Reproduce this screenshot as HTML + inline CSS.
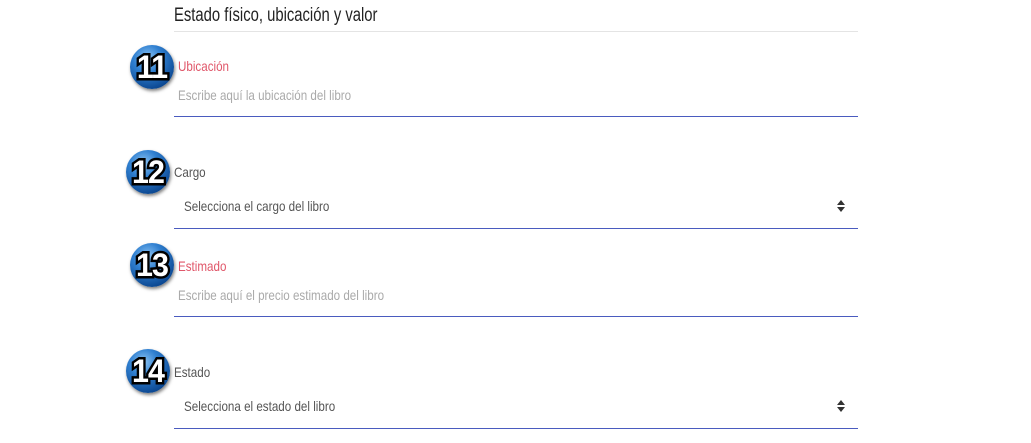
<!DOCTYPE html>
<html><head><meta charset="utf-8"><style>
html,body{margin:0;padding:0;background:#fff;width:1031px;height:443px;overflow:hidden}
body{position:relative;font-family:"Liberation Sans",sans-serif}
.t{position:absolute;white-space:nowrap;transform:scaleX(0.83);transform-origin:0 0}
.line{position:absolute;left:174px;width:684px;height:1px;background:#4a5bbf}
.badge{position:absolute;width:44px;height:44px;border-radius:50%;
background:radial-gradient(circle at 40% 30%,#8cc4f4 0%,#2f7fd0 35%,#0d4a94 75%,#07326a 100%);
box-shadow:1px 2px 3px rgba(0,0,0,.5)}
.badge span{position:absolute;left:0;right:0;top:0;text-align:center;
font:bold 32px "Liberation Sans",sans-serif;color:#fff;line-height:44px;letter-spacing:-1px;
-webkit-text-stroke:5px #000;paint-order:stroke fill;transform:scaleX(0.95)}
.arrow{position:absolute;width:0;height:0;border-left:4px solid transparent;border-right:4px solid transparent}
</style></head><body>
<div class="t" style="left:174px;top:5px;font-size:19px;color:#222;transform:scaleX(0.78)">Estado físico, ubicación y valor</div>
<div style="position:absolute;left:174px;top:31px;width:684px;height:1px;background:#e4e4e4"></div>

<div class="badge" style="left:130px;top:45px"><span>11</span></div>
<div class="t" style="left:178px;top:58px;font-size:14px;color:#e0576a">Ubicación</div>
<div class="t" style="left:178px;top:87px;font-size:14px;color:#aaa">Escribe aquí la ubicación del libro</div>
<div class="line" style="top:116px"></div>

<div class="badge" style="left:126px;top:150px"><span>12</span></div>
<div class="t" style="left:174px;top:164px;font-size:14px;color:#555">Cargo</div>
<div class="t" style="left:184px;top:198px;font-size:14px;color:#555">Selecciona el cargo del libro</div>
<div class="arrow" style="left:837px;top:200px;border-bottom:5px solid #333"></div>
<div class="arrow" style="left:837px;top:207px;border-top:5px solid #333"></div>
<div class="line" style="top:228px"></div>

<div class="badge" style="left:130px;top:243px"><span>13</span></div>
<div class="t" style="left:178px;top:258px;font-size:14px;color:#e0576a">Estimado</div>
<div class="t" style="left:178px;top:287px;font-size:14px;color:#aaa">Escribe aquí el precio estimado del libro</div>
<div class="line" style="top:316px"></div>

<div class="badge" style="left:126px;top:349px"><span>14</span></div>
<div class="t" style="left:174px;top:364px;font-size:14px;color:#555">Estado</div>
<div class="t" style="left:184px;top:398px;font-size:14px;color:#555">Selecciona el estado del libro</div>
<div class="arrow" style="left:837px;top:400px;border-bottom:5px solid #333"></div>
<div class="arrow" style="left:837px;top:407px;border-top:5px solid #333"></div>
<div class="line" style="top:428px"></div>
</body></html>
